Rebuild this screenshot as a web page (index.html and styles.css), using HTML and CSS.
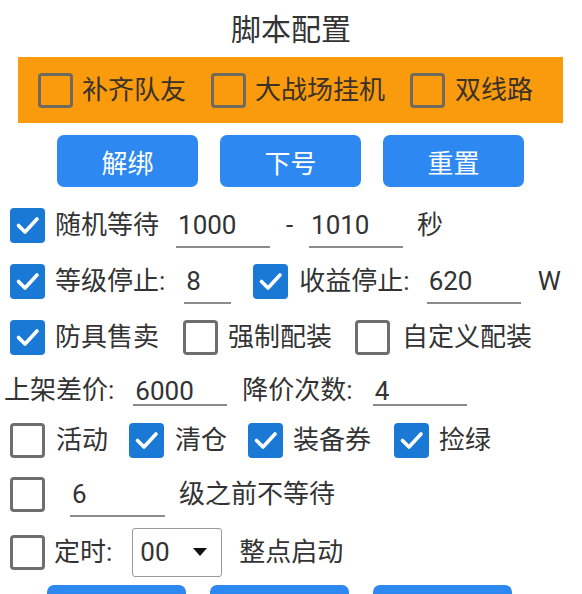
FILE: index.html
```html
<!DOCTYPE html>
<html lang="zh">
<head>
<meta charset="utf-8">
<title>脚本配置</title>
<link rel="stylesheet" href="styles.css">
</head>
<body>
<div class="page">
  <div class="title">脚本配置</div>

  <div class="panel">
    <span class="cb cb-panel p1"></span><span class="txt pl">补齐队友</span>
    <span class="cb cb-panel p2"></span><span class="txt pl">大战场挂机</span>
    <span class="cb cb-panel p2"></span><span class="txt pl pl3">双线路</span>
  </div>

  <div class="btns">
    <div class="btn">解绑</div>
    <div class="btn">下号</div>
    <div class="btn">重置</div>
  </div>

  <div class="row r56">
    <span class="cb on"><svg viewBox="0 0 35 35"><path d="M8.5 17.5 L15 24 L27 11"/></svg></span>
    <span class="txt lbl">随机等待</span>
    <span class="field w94 f1">1000</span>
    <span class="dash">-</span>
    <span class="field w94">1010</span>
    <span class="txt sec">秒</span>
  </div>

  <div class="row r56">
    <span class="cb on"><svg viewBox="0 0 35 35"><path d="M8.5 17.5 L15 24 L27 11"/></svg></span>
    <span class="txt lbl">等级停止:</span>
    <span class="field w47 f2">8</span>
    <span class="cb on c2"><svg viewBox="0 0 35 35"><path d="M8.5 17.5 L15 24 L27 11"/></svg></span>
    <span class="txt lbl2">收益停止:</span>
    <span class="field w94 f3">620</span>
    <span class="txt unit">W</span>
  </div>

  <div class="row r56">
    <span class="cb on"><svg viewBox="0 0 35 35"><path d="M8.5 17.5 L15 24 L27 11"/></svg></span>
    <span class="txt lbl">防具售卖</span>
    <span class="cb c3a"></span>
    <span class="txt lbl">强制配装</span>
    <span class="cb c3b"></span>
    <span class="txt lbl3">自定义配装</span>
  </div>

  <div class="row r50">
    <span class="txt lbl4">上架差价:</span>
    <span class="field short w94 f4">6000</span>
    <span class="txt lbl5">降价次数:</span>
    <span class="field short w94 f5">4</span>
  </div>

  <div class="row r50">
    <span class="cb"></span>
    <span class="txt lbl6">活动</span>
    <span class="cb on c5"><svg viewBox="0 0 35 35"><path d="M8.5 17.5 L15 24 L27 11"/></svg></span>
    <span class="txt lbl6">清仓</span>
    <span class="cb on c5"><svg viewBox="0 0 35 35"><path d="M8.5 17.5 L15 24 L27 11"/></svg></span>
    <span class="txt lbl">装备券</span>
    <span class="cb on c5b"><svg viewBox="0 0 35 35"><path d="M8.5 17.5 L15 24 L27 11"/></svg></span>
    <span class="txt lbl">捡绿</span>
  </div>

  <div class="row r58">
    <span class="cb"></span>
    <span class="field w95 f6">6</span>
    <span class="txt lbl7">级之前不等待</span>
  </div>

  <div class="row r58">
    <span class="cb"></span>
    <span class="txt lbl8">定时:</span>
    <span class="select"><span class="sel-val">00</span><span class="caret"></span></span>
    <span class="txt lbl9">整点启动</span>
  </div>

  <div class="btns btns-bottom">
    <div class="btn"></div>
    <div class="btn"></div>
    <div class="btn"></div>
  </div>
</div>
</body>
</html>
```

FILE: styles.css
```css
html, body {
  margin: 0;
  padding: 0;
  background: #ffffff;
}
body {
  width: 582px;
  height: 594px;
  overflow: hidden;
  font-family: Roboto, "Noto Sans CJK SC", sans-serif;
  color: #333333;
}
.page {
  display: flex;
  flex-direction: column;
  height: 594px;
  overflow: hidden;
}
.title {
  flex: none;
  height: 57px;
  display: flex;
  align-items: center;
  justify-content: center;
  font-size: 30px;
  color: #333;
  padding-bottom: 4px;
  box-sizing: border-box;
}
.txt {
  font-size: 26px;
  line-height: 1;
  white-space: nowrap;
}

/* checkboxes */
.cb {
  flex: none;
  width: 35px;
  height: 35px;
  margin-left: 10px;
  box-sizing: border-box;
  border: 3.5px solid #6e6e6e;
  border-radius: 4px;
  background: #ffffff;
  display: flex;
}
.cb.on {
  border: none;
  background: #1a79d5;
}
.cb svg {
  width: 35px;
  height: 35px;
}
.cb svg path {
  fill: none;
  stroke: #ffffff;
  stroke-width: 3.6;
  stroke-linecap: round;
  stroke-linejoin: round;
}

/* orange panel */
.panel {
  flex: none;
  margin-left: 18px;
  width: 545px;
  height: 66px;
  background: #f99b0d;
  display: flex;
  align-items: center;
}
.panel .cb-panel {
  background: transparent;
  border-color: #6f6a60;
}
.panel .p1 { margin-left: 20px; }
.panel .p2 { margin-left: 25px; }
.pl { margin-left: 9px; color: #3a3226; }
.pl3 { margin-left: 10px; }

/* blue buttons */
.btns {
  flex: none;
  display: flex;
  gap: 22px;
  margin-left: 57px;
  margin-top: 12px;
}
.btn {
  width: 141px;
  height: 52px;
  border-radius: 7px;
  background: #2e88f1;
  color: #ffffff;
  font-size: 26px;
  display: flex;
  align-items: center;
  justify-content: center;
}
.btns-bottom {
  margin-left: 47px;
  margin-top: 4px;
  gap: 24px;
}
.btns-bottom .btn { width: 139px; }

/* rows */
.row {
  flex: none;
  display: flex;
  align-items: center;
}
.r56 { height: 56px; }
.r50 { height: 50px; }
.r58 { height: 58px; }
.btns + .row { margin-top: 10px; }

.c2 { margin-left: 22px; }
.c3a { margin-left: 24px; }
.c3b { margin-left: 23px; }
.c5 { margin-left: 21px; }
.c5b { margin-left: 23px; }

/* labels */
.lbl { margin-left: 10px; }
.lbl2 { margin-left: 11px; }
.lbl3 { margin-left: 12px; }
.lbl4 { margin-left: 4px; }
.lbl5 { margin-left: 15px; }
.lbl6 { margin-left: 11px; }
.lbl7 { margin-left: 14px; }
.lbl8 { margin-left: 9px; }
.lbl9 { margin-left: 17px; }
.sec { margin-left: 14px; }
.unit { margin-left: 17px; }

/* underline fields */
.field {
  flex: none;
  height: 46px;
  box-sizing: border-box;
  border-bottom: 2px solid #8c8c8c;
  display: flex;
  align-items: center;
  padding-left: 2px;
  padding-top: 2px;
  font-size: 26px;
  color: #333333;
}
.field.short {
  height: 30px;
  align-self: flex-start;
  margin-top: 11px;
}
.w94 { width: 94px; }
.w47 { width: 47px; }
.w95 { width: 95px; }
.f1 { margin-left: 17px; }
.f2 { margin-left: 19px; }
.f3 { margin-left: 17px; }
.f4 { margin-left: 19px; }
.f5 { margin-left: 20px; }
.f6 { margin-left: 25px; }

.dash {
  width: 39px;
  text-align: center;
  font-size: 26px;
}

/* select */
.select {
  flex: none;
  margin-left: 20px;
  width: 90px;
  height: 49px;
  box-sizing: border-box;
  border: 1px solid #9a9a9a;
  border-radius: 3px;
  display: flex;
  align-items: center;
  padding-left: 7px;
  font-size: 26px;
}
.caret {
  margin-left: 23px;
  width: 0;
  height: 0;
  border-left: 7px solid transparent;
  border-right: 7px solid transparent;
  border-top: 8px solid #111;
}
```
